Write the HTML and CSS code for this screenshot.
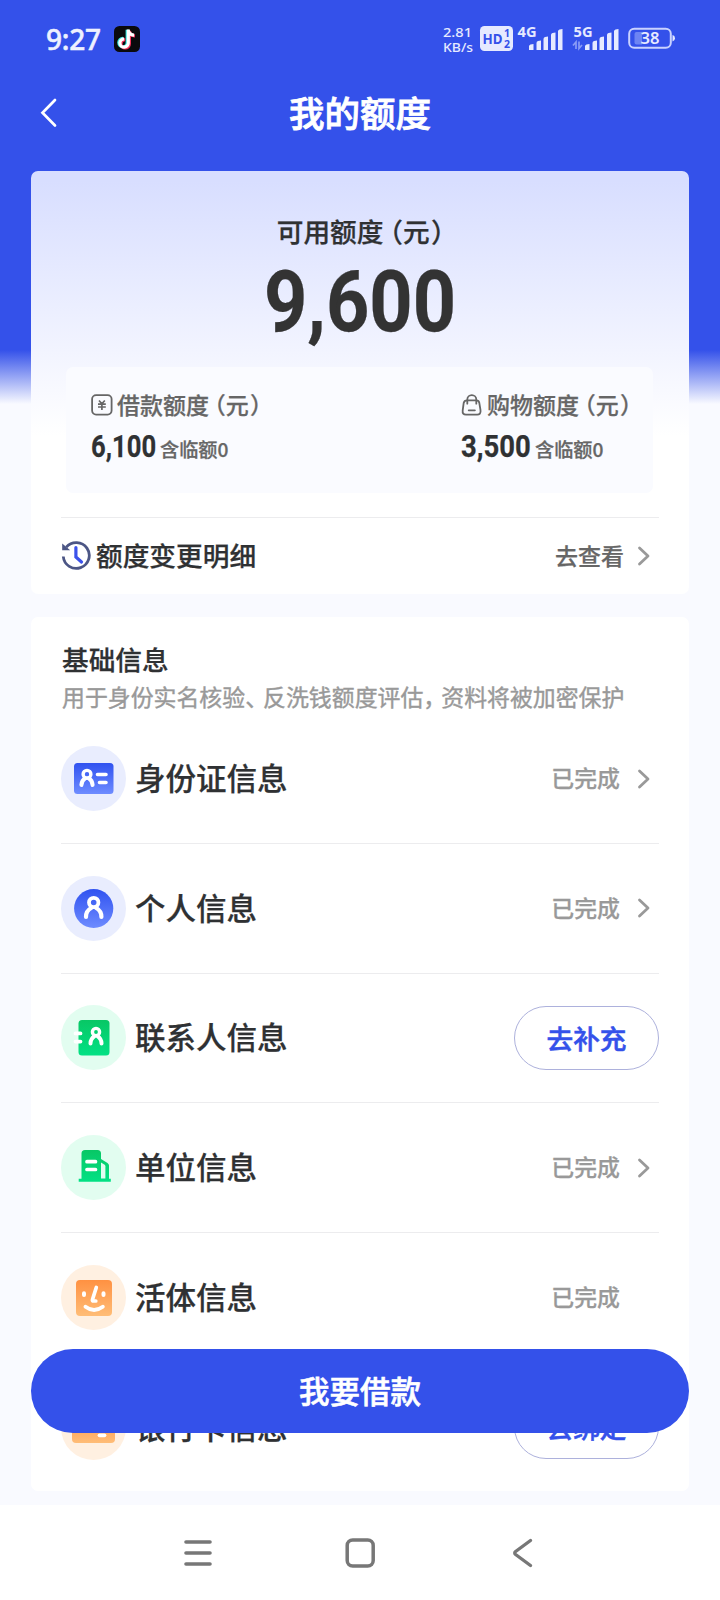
FILE: index.html
```html
<!DOCTYPE html>
<html lang="zh-CN">
<head>
<meta charset="utf-8">
<title>我的额度</title>
<link rel="stylesheet" href="styles.css">
</head>
<body>
<svg width="0" height="0" class="defs">
  <defs>
    <linearGradient id="blue" x1="0" y1="0" x2="0" y2="1"><stop offset="0" stop-color="#3052f0"/><stop offset="1" stop-color="#6e8cff"/></linearGradient>
    <linearGradient id="green" x1="0" y1="0" x2="0" y2="1"><stop offset="0" stop-color="#08c765"/><stop offset="1" stop-color="#02e184"/></linearGradient>
    <linearGradient id="orange" x1="0" y1="0" x2="0" y2="1"><stop offset="0" stop-color="#ff9142"/><stop offset="1" stop-color="#ffbd77"/></linearGradient>
    <symbol id="chev" viewBox="0 0 14 22"><path d="M2.500 3 L11 11 L2.500 19" fill="none" stroke="#999" stroke-width="2.800" stroke-linecap="round" stroke-linejoin="round"/></symbol>
  </defs>
</svg>
<div class="screen">
  <header class="top">
    <div class="status">
      <span class="time">9:27</span>
      <svg class="tiktok" width="26" height="26" viewBox="0 0 26 26">
        <rect width="26" height="26" rx="5.5" fill="#0a0a0d"/>
        <g fill="none" stroke-width="3.2">
          <path d="M13.600 4.200V17a4.200 4.200 0 1 1-4.200-4.200M13.600 4.200c.4 3 2.400 4.800 5.600 5" transform="translate(-.4 -.4)" stroke="#35e6e0"/>
          <path d="M13.600 4.200V17a4.200 4.200 0 1 1-4.200-4.200M13.600 4.200c.4 3 2.400 4.800 5.600 5" transform="translate(1.800 .8)" stroke="#f5305c"/>
          <path d="M14.300 3.500V17a4.200 4.200 0 1 1-4.200-4.200M14.300 4.200c.4 3 2.400 4.800 5.800 5" stroke="#fff"/>
        </g>
      </svg>
      <svg class="signals" width="236" height="34" viewBox="0 0 236 34">
        <g fill="#e6eaff" class="stext">
          <text x="3" y="15" font-size="13" textLength="29" lengthAdjust="spacingAndGlyphs">2.81</text>
          <text x="3" y="29.500" font-size="13" textLength="30" lengthAdjust="spacingAndGlyphs">KB/s</text>
          <rect x="40" y="4" width="33" height="25" rx="4.500"/>
          <g fill="#3451ea" font-weight="700">
            <text x="42.500" y="22.300" font-size="15" textLength="20" lengthAdjust="spacingAndGlyphs">HD</text>
            <text x="64" y="15" font-size="10.500">1</text>
            <text x="64" y="26" font-size="10.500">2</text>
          </g>
          <text x="77.500" y="15" font-size="13.500" font-weight="700" textLength="19" lengthAdjust="spacingAndGlyphs">4G</text>
          <path d="M89 28v-3.500q0-1.500 1.500-2l3-.5v6zM96.500 28v-7q0-1.500 1.500-2l3-.5V28zM103.500 28V17q0-1.500 1.500-2l3-.5V28zM111 28V13q0-1.500 1.500-2l3-.5V28zM118 28V9.500q0-1.500 1.500-2l3-.5V28z"/>
          <text x="133.500" y="15" font-size="13.500" font-weight="700" textLength="19" lengthAdjust="spacingAndGlyphs">5G</text>
          <path transform="translate(56)" d="M89 28v-3.500q0-1.500 1.500-2l3-.5v6zM96.500 28v-7q0-1.500 1.500-2l3-.5V28zM103.500 28V17q0-1.500 1.500-2l3-.5V28zM111 28V13q0-1.500 1.500-2l3-.5V28zM118 28V9.500q0-1.500 1.500-2l3-.5V28z"/>
          <path d="M136 27v-7l-3 3.500M139 19.500v7l3-3.500" fill="none" stroke="#8b9cf6" stroke-width="1.700"/>
          <rect x="189.200" y="6.700" width="41.600" height="19" rx="5" fill="none" stroke="#c9d2ff" stroke-width="2"/>
          <path d="M196.500 10h5.500v12.500h-5.500q-2 0-2-2V12q0-2 2-2z" fill="#6d84f3"/>
          <path d="M232.500 13q2.500 .5 2.500 3.200t-2.500 3.200z"/>
          <text x="200.500" y="22" font-size="15.500" font-weight="600" textLength="19" lengthAdjust="spacingAndGlyphs">38</text>
        </g>
      </svg>
    </div>
    <div class="titlebar">
      <svg class="back" width="20" height="32" viewBox="0 0 20 32"><path d="M17 3 L4.500 15.800 L17 28.500" fill="none" stroke="#fff" stroke-width="2.700" stroke-linecap="round"/></svg>
      <h1>我的额度</h1>
    </div>
  </header>

  <section class="card summary">
    <p class="avail">可用额度<span class="po">（</span>元<span class="pc">）</span></p>
    <p class="amount"><span>9,600</span></p>
    <div class="quotas">
      <div class="quota">
        <p class="qname">
          <svg width="22" height="22" viewBox="0 0 22 22" fill="none" stroke="#666"><rect x="1.100" y="1.100" width="19.500" height="19.500" rx="4" stroke-width="1.800"/><path d="M8 6.500l2.900 3.300L13.800 6.500M10.900 9.800V16M7 10.200h7.800M7 13h7.800" stroke-width="1.700"/></svg>
          <span>借款额度<span class="po">（</span>元<span class="pc">）</span></span>
        </p>
        <p class="qval"><b class="n1"><span>6,100</span></b><span>含临额0</span></p>
      </div>
      <div class="quota">
        <p class="qname">
          <svg width="22" height="22" viewBox="0 0 22 22" fill="none" stroke="#666" stroke-width="1.800"><path d="M6.200 6.300h9.200c2 0 2.600 1 2.900 2.500l1.200 7.300c.5 3.200-1 4.600-3.300 4.600H5c-2.500 0-3.700-1.500-3.300-4.400l1-7.300c.3-1.800 1.400-2.700 3.500-2.700z"/><path d="M6.300 9.700V5.500a4.500 4.300 0 0 1 9 0v4.200M7.700 16.300h6.200" stroke-linecap="round"/></svg>
          <span>购物额度<span class="po">（</span>元<span class="pc">）</span></span>
        </p>
        <p class="qval"><b class="n2"><span>3,500</span></b><span>含临额0</span></p>
      </div>
    </div>
    <div class="history">
      <svg width="30" height="30" viewBox="0 0 30 30" fill="none"><path d="M5.300 6.200A13 12.900 0 1 1 2.300 15.500" stroke="#4c5685" stroke-width="2.800"/><path d="M1.200 2.600V9.300H9.200z" fill="#4c5685"/><path d="M14.900 6.500v9.500l5.600 5" stroke="#3b51ea" stroke-width="3.200" stroke-linecap="round"/></svg>
      <span class="hname">额度变更明细</span>
      <span class="look">去查看</span>
      <svg class="chev" width="14" height="22"><use href="#chev"/></svg>
    </div>
  </section>

  <section class="card info">
    <h2>基础信息</h2>
    <p class="desc">用于身份实名核验<span class="pt">、</span>反洗钱额度评估<span class="pt">，</span>资料将被加密保护</p>
    <ul class="rows">
      <li>
        <svg class="ico" width="65" height="65" viewBox="0 0 65 65"><circle cx="32.500" cy="32.500" r="32.500" fill="#e9edfe"/><rect x="13" y="17" width="39.500" height="31" rx="3.500" fill="url(#blue)"/><g fill="none" stroke="#fff" stroke-linecap="round"><circle cx="26" cy="28.300" r="3.900" stroke-width="3.400"/><path d="M20.400 39q.3-4.600 4-7M31.600 39q-.3-4.600-4-7" stroke-width="4"/><path d="M36.500 28.500h8.500M38.500 36.500h6.500" stroke-width="3.600"/></g></svg>
        <span class="label">身份证信息</span><span class="done">已完成</span><svg class="chev" width="14" height="22"><use href="#chev"/></svg>
      </li>
      <li>
        <svg class="ico" width="65" height="65" viewBox="0 0 65 65"><circle cx="32.500" cy="32.500" r="32.500" fill="#e9edfe"/><circle cx="32.700" cy="32.500" r="19.600" fill="url(#blue)"/><g fill="none" stroke="#fff" stroke-linecap="round"><circle cx="32.700" cy="26.500" r="4.700" stroke-width="3.800"/><path d="M25 41q-.2-6 5.200-9M40.400 41q.2-6-5.200-9" stroke-width="4.200"/></g></svg>
        <span class="label">个人信息</span><span class="done">已完成</span><svg class="chev" width="14" height="22"><use href="#chev"/></svg>
      </li>
      <li>
        <svg class="ico" width="65" height="65" viewBox="0 0 65 65"><circle cx="32.500" cy="32.500" r="32.500" fill="#e2fdf0"/><rect x="17.500" y="15" width="31" height="35.500" rx="3.500" fill="url(#green)"/><g fill="none" stroke="#fff" stroke-linecap="round"><path d="M14.500 28.400h5M14.500 36.600h5" stroke-width="3.800"/><circle cx="35" cy="27" r="3.600" stroke-width="3.400"/><path d="M29.500 38.500q0-4.500 4-7.300M40.500 38.500q0-4.500-4-7.300" stroke-width="4"/></g></svg>
        <span class="label">联系人信息</span><a class="pill">去补充</a>
      </li>
      <li>
        <svg class="ico" width="65" height="65" viewBox="0 0 65 65"><circle cx="32.500" cy="32.500" r="32.500" fill="#e2fdf0"/><path d="M24 15h12.500q3.500 0 3.500 3.500V24l6.500 4q1.500 1 1.500 2.500V43.800h1.800V46.800H17.700V43.800H20.500V18.500q0-3.500 3.500-3.500z" fill="url(#green)"/><path d="M40 27.500l3.700 2.300q.7.500.7 1.500V43.600H40z" fill="#e2fdf0"/><path d="M26 26.700h8.500M26 34.500h8.500" stroke="#fff" stroke-width="3.700" stroke-linecap="round"/></svg>
        <span class="label">单位信息</span><span class="done">已完成</span><svg class="chev" width="14" height="22"><use href="#chev"/></svg>
      </li>
      <li>
        <svg class="ico" width="65" height="65" viewBox="0 0 65 65"><circle cx="32.500" cy="32.500" r="32.500" fill="#fff0e1"/><rect x="15" y="15" width="36" height="36" rx="4" fill="url(#orange)"/><g fill="none" stroke="#fff" stroke-width="4" stroke-linecap="round" stroke-linejoin="round"><path d="M23 28.300v1.700M42.500 28.300v1.700"/><path d="M35.300 22.500L31.500 34.500q-.4 1.500 1 1.500h2.300" stroke-width="3.700"/><path d="M24.500 41.700q8.500 6.500 17.300 0" stroke-width="3.900"/></g></svg>
        <span class="label">活体信息</span><span class="done">已完成</span><span class="chev gap"></span>
      </li>
      <li>
        <svg class="ico" width="65" height="65" viewBox="0 0 65 65"><circle cx="32.500" cy="32.500" r="32.500" fill="#fff0e1"/><rect x="11" y="17" width="43" height="31" rx="4" fill="url(#orange)"/><path d="M38.500 40.300h5" stroke="#fff" stroke-width="3.700" stroke-linecap="round"/></svg>
        <span class="label">银行卡信息</span><a class="pill">去绑定</a>
      </li>
    </ul>
  </section>

  <button class="borrow">我要借款</button>

  <nav class="nav">
    <svg width="30" height="30" viewBox="0 0 30 30" stroke="#777" stroke-width="3.600" stroke-linecap="round"><path d="M3 4h24M3 15h24M3 26h24"/></svg>
    <svg width="30" height="30" viewBox="0 0 30 30"><rect x="2.200" y="2" width="26" height="26" rx="5.500" fill="none" stroke="#777" stroke-width="3.500"/></svg>
    <svg width="30" height="30" viewBox="0 0 30 30" fill="none" stroke="#777" stroke-width="3.400" stroke-linecap="round" stroke-linejoin="round"><path d="M23.500 2.500L8.600 13.500q-1.700 1.500 0 3L23.500 27.500"/></svg>
  </nav>
</div>
</body>
</html>
```
FILE: styles.css
```css
* { box-sizing: border-box; margin: 0; padding: 0; }
body { font-family: "Noto Sans CJK SC", "Noto Sans", sans-serif; color: #2f3133; font-weight: 500; -webkit-text-stroke: .25px currentColor; }
.defs { position: absolute; }
.screen {
  position: relative; width: 720px; height: 1600px; overflow: hidden;
  display: flex; flex-direction: column;
  background: linear-gradient(#3451ea 350px, #f9faff 404px);
}
svg { display: block; flex: none; -webkit-text-stroke: 0; }

.top { height: 171px; color: #fff; }
.status { height: 78px; padding: 0 44px 0 46px; display: flex; align-items: center; }
.time { width: 68px; font: 500 28px/1 "Noto Sans"; color: #eef1ff; letter-spacing: -.2px; -webkit-text-stroke: .5px currentColor; }
.signals { margin-left: auto; }
.stext { font-family: "Noto Sans"; font-weight: 500; }
.titlebar { height: 70px; display: grid; grid-template-columns: 60px 1fr 60px; align-items: center; }
.back { margin-left: 38px; }
h1 { padding-bottom: 3px; text-align: center; font-size: 35.500px; line-height: 50px; font-weight: 500; -webkit-text-stroke: .8px currentColor; }

.card { flex: none; margin: 0 31px; border-radius: 7px; padding: 0 30px; background: #fff; }
.summary { height: 423px; background: linear-gradient(#d8deff 10px, #fff 265px); }
.avail { padding: 41px 0 0 1px; height: 84px; text-align: center; font-size: 26.700px; line-height: 38px; white-space: nowrap; }
.po, .pc { font-feature-settings: "halt"; }
.po { margin-left: .23em; }
.pc { margin-left: .05em; }
.amount { height: 112px; text-align: center; font: 700 85px/94px Roboto; color: #333; white-space: nowrap; }
.amount span { display: inline-block; transform: scaleX(.89); }
.quotas { height: 126px; margin: 0 6px 0 5px; padding: 22px 22px 0 25px; border-radius: 7px; background: #fafbff; display: flex; justify-content: space-between; }
.quota { width: 170px; white-space: nowrap; }
.qname { display: flex; align-items: center; gap: 4px; height: 32px; color: #666; font-size: 23px; line-height: 32px; }
.qname > span { margin-top: -3px; }
.qval { display: flex; align-items: baseline; height: 48px; padding-top: 2px; line-height: 48px; font-size: 19.200px; color: #666; }
.qval b { font: 700 30.500px/48px Roboto; color: #2f3133; width: 69px; }
.qval b.n2 { width: 74px; }
.qval b span { display: inline-block; transform: scaleX(.84); transform-origin: left; }
.qval b.n2 span { transform: scaleX(.9); }
.history { margin-top: 24px; border-top: 1px solid #ececee; height: 77px; display: flex; align-items: center; }
.hname { margin: -3px 0 0 5px; font-size: 26.700px; }
.look { margin: -3px 0 0 auto; font-size: 23px; color: #666; }
.chev { margin-left: 13px; margin-right: 8px; width: 14px; }

.info { margin-top: 23px; height: 874px; }
h2 { padding: 23px 0 0 1px; height: 62px; font-size: 26.700px; line-height: 38px; font-weight: 500; }
.desc { padding-left: 1px; height: 35.500px; font-size: 22.900px; line-height: 35px; color: #999; white-space: nowrap; font-weight: 400; -webkit-text-stroke: .4px currentColor; }
.pt { font-feature-settings: "halt"; margin-right: 6.500px; }
.rows { list-style: none; }
.rows li { height: 129.600px; display: flex; align-items: center; border-bottom: 1px solid #ececee; }
.rows li:last-child { border: 0; }
.label { margin: -3px 0 0 9px; font-size: 30.500px; }
.done { margin: -3px 0 0 auto; font-size: 22.900px; color: #999; }
.rows .chev { margin-left: 17px; }
.pill { margin-left: auto; width: 145px; height: 64px; border: 1px solid #adb1dc; border-radius: 32px; text-align: center; font-size: 26.700px; line-height: 61px; color: #3451ea; -webkit-text-stroke: .5px currentColor; }

.borrow { position: absolute; left: 31px; top: 1349px; width: 658px; height: 84px; border: 0; border-radius: 42px; background: #3451ea; color: #fff; font: 500 30.500px/82px "Noto Sans CJK SC", sans-serif; padding-bottom: 2px; -webkit-text-stroke: .6px currentColor; }
.nav { margin-top: 14px; height: 95px; flex: none; background: #fff; display: flex; justify-content: center; gap: 132px; padding-top: 33px; }
```
